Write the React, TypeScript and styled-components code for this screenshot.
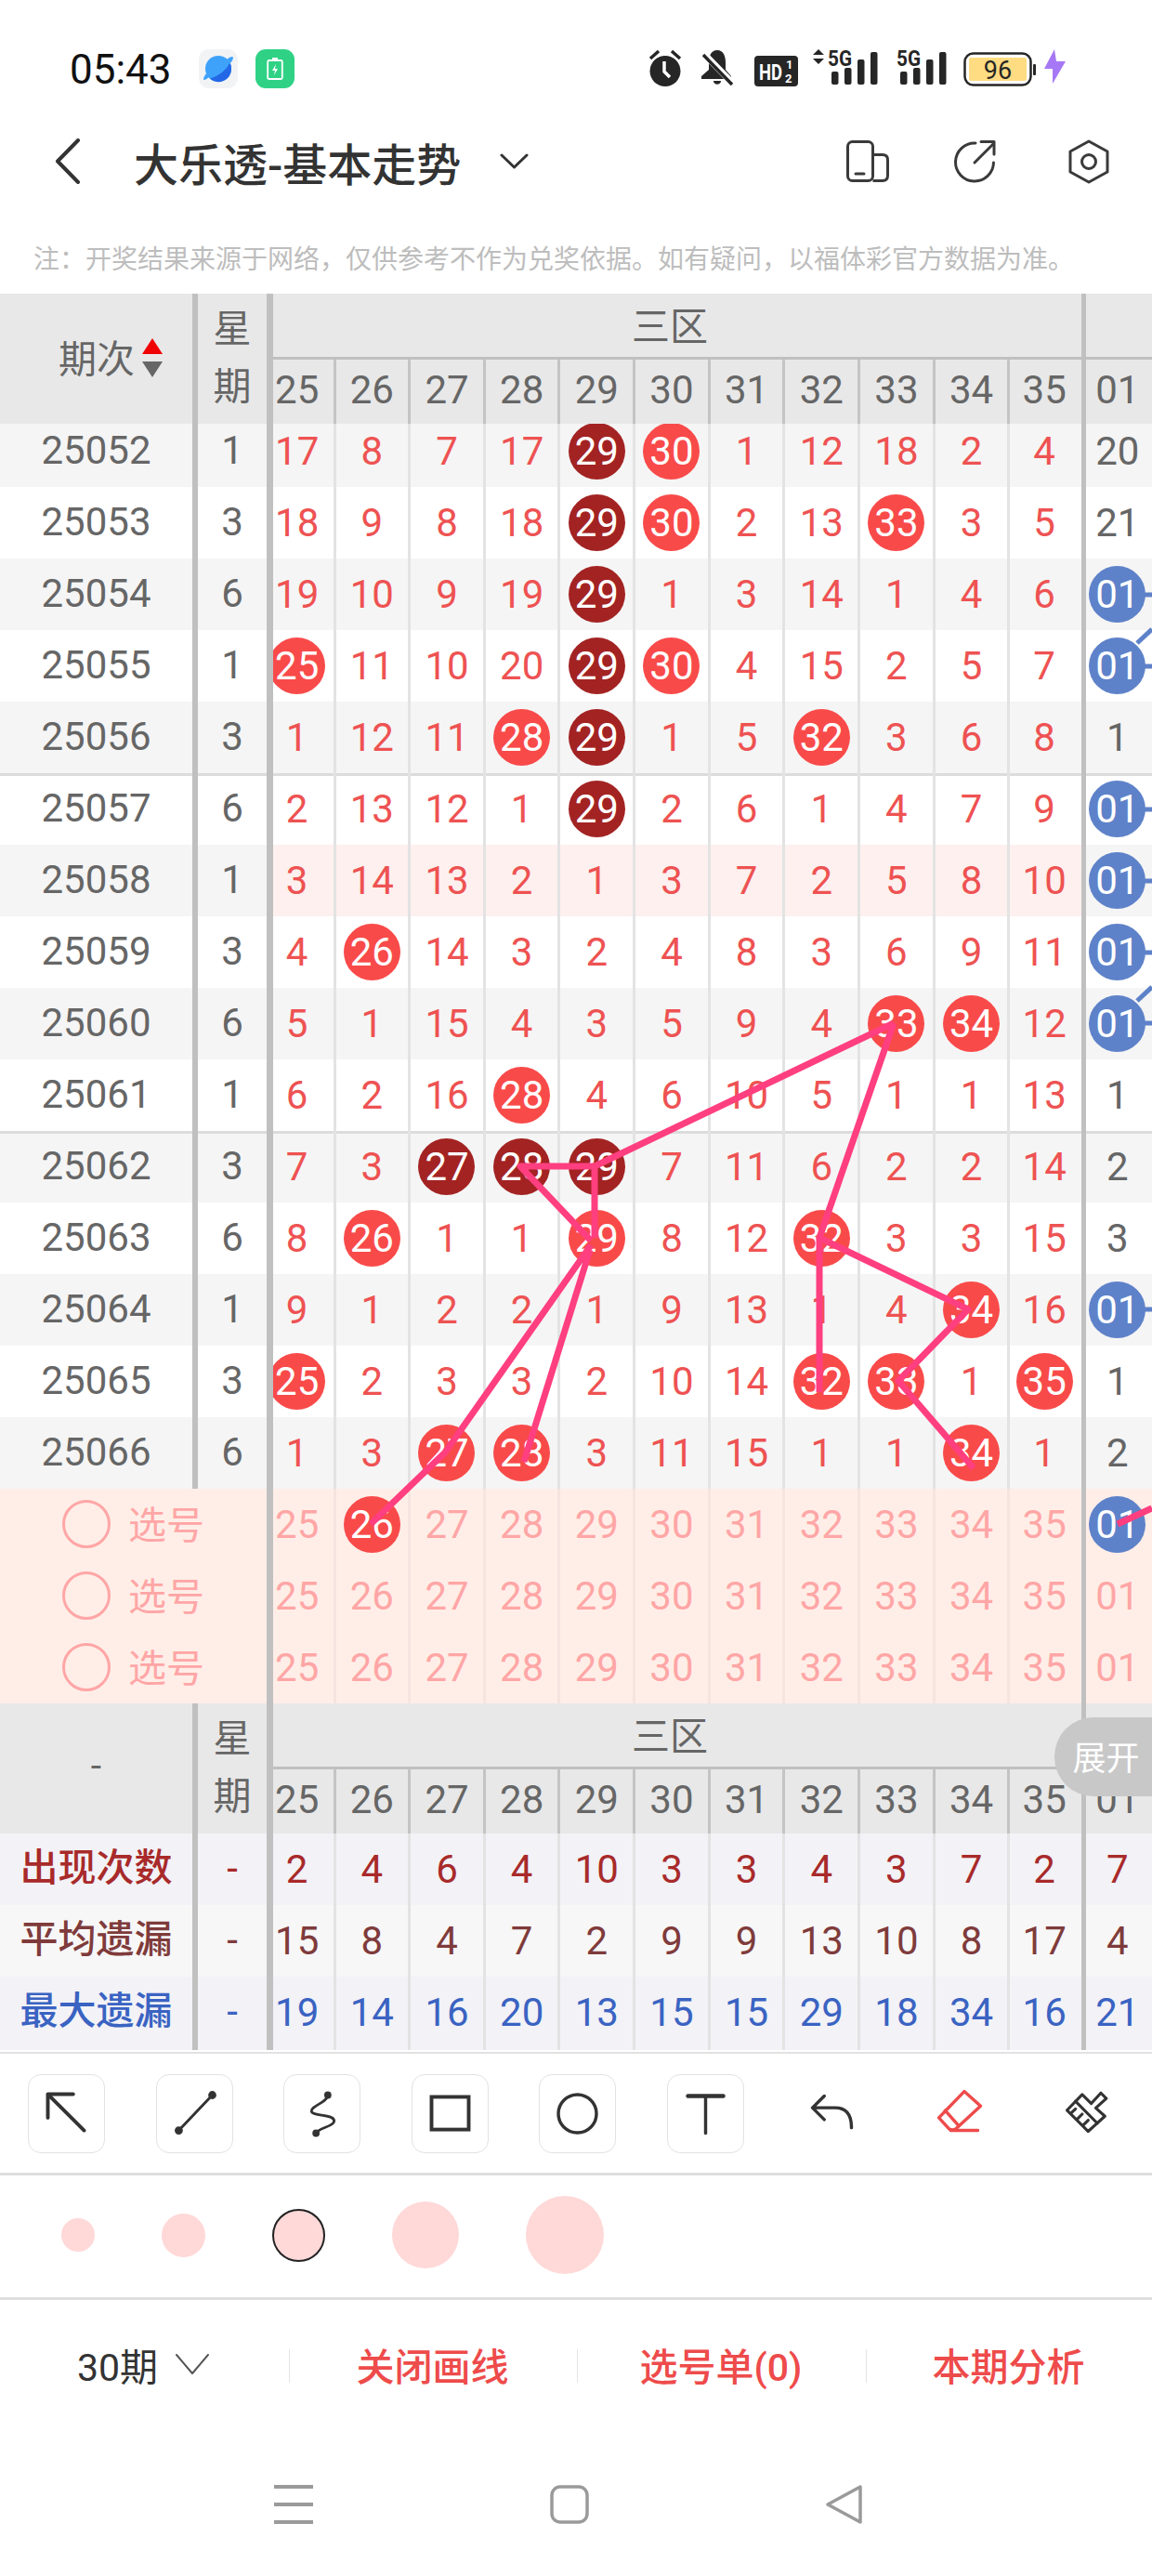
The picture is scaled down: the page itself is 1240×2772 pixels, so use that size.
import React from 'react';
import styled, { createGlobalStyle } from 'styled-components';

const FONT = `Roboto, "Noto Sans CJK SC", "Noto Sans", sans-serif`;
const COLS = '213px 81px 67.5px repeat(9, 80.67px) 76.5px 1fr';
const NUMW = 80.67;

const Global = createGlobalStyle`
  html, body { margin: 0; padding: 0; background: #fff; }
  body { font-family: ${FONT}; }
  * { box-sizing: border-box; }
`;

const Page = styled.div`
  width: 1240px;
  height: 2772px;
  overflow: hidden;
  background: #fff;
  color: #333;
  font-family: ${FONT};
`;

/* ---------- status bar ---------- */
const StatusBar = styled.div`
  height: 125px;
  display: flex;
  align-items: flex-start;
  padding: 53px 93px 0 75px;
`;
const Time = styled.div`
  font-size: 44px;
  line-height: 44px;
  font-weight: 400;
  color: #111;
  margin-right: 29px;
`;
const AppIcon = styled.div<{ $bg: string }>`
  width: 42px;
  height: 42px;
  border-radius: 11px;
  background: ${(p) => p.$bg};
  display: flex;
  align-items: center;
  justify-content: center;
  margin-right: 19px;
`;
const StatusIcons = styled.div`
  margin-left: auto;
  display: flex;
  align-items: flex-start;
`;
const Glyph = styled.span<{ $ml: number; $mt?: number }>`
  display: flex;
  margin-left: ${(p) => p.$ml}px;
  margin-top: ${(p) => p.$mt ?? 0}px;
`;

/* ---------- nav bar ---------- */
const NavBar = styled.div`
  height: 97px;
  display: flex;
  align-items: center;
  padding: 0 46px 0 59px;
`;
const Title = styled.div`
  font-size: 48px;
  font-weight: 500;
  color: #333;
  margin-left: 58px;
  margin-right: 42px;
  white-space: nowrap;
`;
const NavActions = styled.div`
  margin-left: auto;
  display: flex;
  align-items: center;
  gap: 69px;
`;
const Note = styled.div`
  height: 94px;
  padding: 38px 0 0 36px;
  font-size: 28px;
  line-height: 40px;
  color: #bdbdbd;
  white-space: nowrap;
`;

/* ---------- table ---------- */
const Table = styled.div`
  position: relative;
  width: 1240px;
  height: 1890px;
  overflow: hidden;
  font-size: 42px;
`;
const Overlay = styled.svg`
  position: absolute;
  left: 0;
  top: 0;
  pointer-events: none;
`;
const Head = styled.div`
  position: relative;
  display: grid;
  grid-template-columns: ${COLS};
  grid-template-rows: 71px 69px;
  height: 140px;
  background: #e8e8e8;
  color: #666;
`;
const HeadCorner = styled.div<{ $center?: boolean }>`
  grid-row: 1 / 3;
  grid-column: 1;
  display: flex;
  align-items: center;
  justify-content: ${(p) => (p.$center ? 'center' : 'flex-start')};
  padding: ${(p) => (p.$center ? '0 6px 6px 0' : '0 0 6px 63px')};
  gap: 8px;
  font-size: 41px;
  box-shadow: inset -6px 0 #c0c0c0;
`;
const Sort = styled.div`
  display: flex;
  flex-direction: column;
  gap: 8px;
  margin-top: 4px;
`;
const Tri = styled.div<{ $up?: boolean }>`
  width: 0;
  height: 0;
  border-left: 11px solid transparent;
  border-right: 11px solid transparent;
  ${(p) => (p.$up ? 'border-bottom: 17px solid #f00000;' : 'border-top: 17px solid #666;')}
`;
const HeadWeek = styled.div`
  grid-row: 1 / 3;
  grid-column: 2;
  display: flex;
  flex-direction: column;
  align-items: center;
  justify-content: center;
  gap: 14px;
  padding: 0 7px 2px 0;
  font-size: 41px;
  line-height: 48px;
  box-shadow: inset -7px 0 #c0c0c0;
`;
const HeadZone = styled.div`
  grid-row: 1;
  grid-column: 3 / 14;
  display: flex;
  align-items: center;
  justify-content: center;
  font-size: 41px;
  padding: 0 16px 8px 0;
  box-shadow: inset 0 -3px #c0c0c0;
`;
const HeadZoneTail = styled.div`
  grid-row: 1;
  grid-column: 14;
  box-shadow: inset 5px 0 #c0c0c0, inset 0 -3px #c0c0c0;
`;
const Expand = styled.div`
  position: absolute;
  right: 0;
  top: 15px;
  width: 105px;
  height: 85px;
  border-radius: 42px 0 0 42px;
  background: #c8c8c8;
  color: #fff;
  font-size: 36px;
  display: flex;
  align-items: center;
  justify-content: center;
  padding: 0 0 4px 6px;
`;
const Row = styled.div<{ $bg: string; $h?: number; $rule?: boolean; $clip?: boolean }>`
  display: grid;
  grid-template-columns: ${COLS};
  height: ${(p) => p.$h ?? 77}px;
  background: ${(p) => p.$bg};
  overflow: hidden;
  ${(p) => (p.$rule ? 'box-shadow: inset 0 3px #dcdcdc;' : '')}
  ${(p) => (p.$clip ? '&& > * { margin-top: -9px; height: 77px; }' : '')}
`;
const Label = styled.div<{ $color?: string; $medium?: boolean }>`
  height: 100%;
  min-height: 77px;
  display: flex;
  align-items: flex-start;
  justify-content: center;
  line-height: 75px;
  padding-right: 6px;
  color: ${(p) => p.$color ?? '#666'};
  font-size: ${(p) => (p.$medium ? '41px' : '42px')};
  font-weight: ${(p) => (p.$medium ? 500 : 400)};
  box-shadow: inset -6px 0 #c0c0c0;
`;
const Week = styled(Label)`
  padding-right: 7px;
  box-shadow: inset -7px 0 #c0c0c0;
`;
const PickLabel = styled.div`
  grid-column: 1 / 3;
  display: flex;
  align-items: center;
  gap: 19px;
  padding-left: 67px;
  color: #ffa6a6;
  font-size: 41px;
  box-shadow: inset -7px 0 #c0c0c0;
`;
const PickRing = styled.div`
  width: 52px;
  height: 52px;
  border-radius: 50%;
  border: 3px solid #ffa6a6;
  margin-top: -2px;
`;
const PickText = styled.span`
  margin-top: -6px;
`;
type Pos = 'first' | 'mid' | 'end' | 'tail';
const Cell = styled.div<{ $pos: Pos; $line: string; $pink?: boolean }>`
  height: 100%;
  min-height: 69px;
  overflow: hidden;
  display: flex;
  align-items: flex-start;
  justify-content: ${(p) => (p.$pos === 'first' ? 'flex-end' : p.$pos === 'tail' ? 'flex-start' : 'center')};
  background: ${(p) => (p.$pink ? '#fdf0ee' : 'transparent')};
  box-shadow: ${(p) =>
    p.$pos === 'tail'
      ? 'inset 5px 0 #c0c0c0'
      : p.$pos === 'end'
        ? 'none'
        : `inset -3px 0 ${p.$line}`};
`;
const Num = styled.div<{ $color: string; $tall?: boolean }>`
  flex: none;
  width: ${NUMW}px;
  height: ${(p) => (p.$tall ? 77 : 69)}px;
  display: flex;
  align-items: center;
  justify-content: center;
  padding: 0 3px ${(p) => (p.$tall ? 0 : 4)}px 0;
  color: ${(p) => p.$color};
  font-size: 42px;
`;
const Ball = styled.div<{ $bg: string }>`
  width: 61px;
  height: 61px;
  border-radius: 50%;
  background: ${(p) => p.$bg};
  color: #fff;
  display: flex;
  align-items: center;
  justify-content: center;
  flex: none;
`;

/* ---------- drawing tools ---------- */
const Tools = styled.div`
  margin-top: 2px;
  border-top: 2px solid #e2e2e2;
  border-bottom: 3px solid #dedede;
  height: 133px;
  padding: 22px 0 0 30px;
  display: flex;
  gap: 54.5px;
`;
const Tool = styled.div<{ $boxed?: boolean }>`
  width: 83px;
  height: 85px;
  border-radius: 14px;
  border: 1.5px solid ${(p) => (p.$boxed ? '#e2e2e2' : 'transparent')};
  flex: none;
  display: flex;
  align-items: center;
  justify-content: center;
`;
const Sizes = styled.div`
  height: 134px;
  border-bottom: 3px solid #dedede;
  display: flex;
  align-items: center;
  gap: 72px;
  padding: 0 0 3px 66px;
`;
const Dot = styled.div<{ $d: number; $on?: boolean }>`
  width: ${(p) => p.$d}px;
  height: ${(p) => p.$d}px;
  border-radius: 50%;
  background: #ffd8d8;
  border: ${(p) => (p.$on ? '2px solid #222' : 'none')};
`;
const Bottom = styled.div`
  height: 142px;
  display: grid;
  grid-template-columns: 311px 310px 311px 308px;
  align-items: center;
  font-size: 41px;
`;
const BottomItem = styled.div<{ $first?: boolean }>`
  height: 36px;
  display: flex;
  align-items: center;
  justify-content: center;
  gap: 18px;
  padding: 0 2px 5px 0;
  white-space: nowrap;
  color: ${(p) => (p.$first ? '#333' : '#ee4b4b')};
  font-weight: ${(p) => (p.$first ? 400 : 500)};
  ${(p) => (p.$first ? '' : 'border-left: 1.5px solid #e4e4e4;')}
`;
const SysNav = styled.div`
  display: flex;
  gap: 255px;
  padding: 57px 0 0 295px;
`;

/* ---------- icons ---------- */
const D = '#262626';
const Alarm = () => (
  <svg width="36" height="40" viewBox="0 0 36 40">
    <circle cx="18" cy="23.5" r="16.5" fill={D} />
    <path d="M2 10 L11 2 M34 10 L25 2" stroke={D} strokeWidth="3.5" />
    <path d="M17 13 V24 L23 30" stroke="#fff" strokeWidth="3.5" fill="none" />
  </svg>
);
const BellOff = () => (
  <svg width="36" height="40" viewBox="0 0 36 40">
    <path d="M18 1 C11 1 9 8 9 14 V22 L1 29 V32 H33 V29 L27 22 V14 C27 8 25 1 18 1 Z" fill={D} />
    <path d="M14 34 H22 C22 39 14 39 14 34 Z" fill={D} />
    <path d="M3 4 L34 36" stroke="#fff" strokeWidth="7" />
    <path d="M3 6 L34 38" stroke={D} strokeWidth="3.5" />
  </svg>
);
const TextS = styled.text`
  font-family: Roboto, sans-serif;
`;
const HD = () => (
  <svg width="47" height="33" viewBox="0 0 47 33">
    <rect width="47" height="33" rx="4" fill={D} />
    <TextS x="5" y="26" fontSize="24" fontWeight="700" fill="#fff" textLength="25" lengthAdjust="spacingAndGlyphs">HD</TextS>
    <TextS x="34" y="14" fontSize="13" fontWeight="700" fill="#fff">1</TextS>
    <TextS x="33" y="29" fontSize="13" fontWeight="700" fill="#fff">2</TextS>
  </svg>
);
const Signal = ({ arrows }: { arrows?: boolean }) => {
  const o = arrows ? 16 : 0;
  return (
    <svg width={54 + o} height="46" viewBox={`0 -8 ${54 + o} 46`}>
      {arrows && <path d="M0 6 L6 0 L12 6 Z M0 10 L12 10 L6 16 Z" fill={D} />}
      <TextS x={o} y="18" fontSize="23" fontWeight="700" fill={D} textLength="26" lengthAdjust="spacingAndGlyphs">5G</TextS>
      {[[4, 24, 14], [18, 20, 18], [32, 11, 27], [46, 3, 35]].map(([x, y, h]) => (
        <rect key={x} x={x + o} y={y} width="7.5" height={h} rx="2" fill={D} />
      ))}
    </svg>
  );
};
const Battery = () => (
  <svg width="78" height="37" viewBox="0 0 78 37">
    <rect x="1.5" y="1.5" width="71" height="34" rx="9" fill="#fff" stroke={D} strokeWidth="2.5" />
    <rect x="6" y="6" width="62" height="25" rx="2" fill="#ffdc82" />
    <rect x="75" y="13" width="3" height="12" rx="1" fill={D} />
    <TextS x="37" y="28.5" textAnchor="middle" fontSize="27" fill={D}>96</TextS>
  </svg>
);
const Bolt = () => (
  <svg width="23" height="37" viewBox="0 0 23 37">
    <path d="M11 0 L0 21 H9 L9 37 L23 13 H13 Z" fill="#a678f5" />
  </svg>
);
const Back = () => (
  <svg width="27" height="49" viewBox="0 0 27 49">
    <path d="M25 2 L3 24.5 L25 47" fill="none" stroke="#333" strokeWidth="4" strokeLinecap="round" strokeLinejoin="round" />
  </svg>
);
const ChevronDown = ({ w, h, c = '#333', s = 3 }: { w: number; h: number; c?: string; s?: number }) => (
  <svg width={w} height={h} viewBox={`0 0 ${w} ${h}`}>
    <path d={`M2 2 L${w / 2} ${h - 2} L${w - 2} 2`} fill="none" stroke={c} strokeWidth={s} strokeLinecap="round" strokeLinejoin="round" />
  </svg>
);
const PhoneIcon = () => (
  <svg width="46" height="45" viewBox="0 0 46 45" fill="none" stroke="#3a3a3a" strokeWidth="3">
    <rect x="1.5" y="1.5" width="27" height="42" rx="5" />
    <path d="M28.5 15.5 H39 Q44.5 15.5 44.5 21 V38 Q44.5 43.5 39 43.5 H28.5" />
    <path d="M10 36 H19" strokeLinecap="round" />
  </svg>
);
const ShareIcon = () => (
  <svg width="46" height="48" viewBox="0 0 46 48" fill="none" stroke="#3a3a3a" strokeWidth="3" strokeLinecap="round" strokeLinejoin="round">
    <path d="M24 4 A20.5 20.5 0 1 0 43.5 25" />
    <path d="M23 25 L43 5" />
    <path d="M30 2.5 H44 V16" />
  </svg>
);
const HexIcon = () => (
  <svg width="44" height="48" viewBox="0 0 44 48" fill="none" stroke="#3a3a3a" strokeWidth="3" strokeLinejoin="round">
    <path d="M22 2 L42 13 V35 L22 46 L2 35 V13 Z" />
    <circle cx="22" cy="24" r="7.5" />
  </svg>
);
const ToolArrow = () => (
  <svg width="83" height="85" viewBox="0 0 83 85" fill="none" stroke="#333" strokeWidth="4" strokeLinecap="round">
    <path d="M21 21 L61 61 M21 21 H49 M21 21 V47" />
  </svg>
);
const ToolLine = () => (
  <svg width="83" height="85" viewBox="0 0 83 85" fill="none" stroke="#333" strokeWidth="3" strokeLinecap="round">
    <path d="M61 22 L24 61" />
    <circle cx="61" cy="22" r="3" fill="#333" />
    <circle cx="24" cy="61" r="3" fill="#333" />
  </svg>
);
const ToolCurve = () => (
  <svg width="83" height="85" viewBox="0 0 83 85" fill="none" stroke="#333" strokeWidth="2.8" strokeLinecap="round">
    <path d="M48 22 C48 30 29 34 30 40 C31 46 56 42 55 51 C54 57 38 58 35 64" />
    <circle cx="48" cy="22" r="2.6" fill="#333" />
    <circle cx="35" cy="64" r="2.6" fill="#333" />
  </svg>
);
const ToolRect = () => (
  <svg width="83" height="85" viewBox="0 0 83 85" fill="none" stroke="#333" strokeWidth="4">
    <rect x="21" y="24" width="41" height="36" />
  </svg>
);
const ToolCircle = () => (
  <svg width="83" height="85" viewBox="0 0 83 85" fill="none" stroke="#333" strokeWidth="3.5">
    <circle cx="41.5" cy="42.5" r="21" />
  </svg>
);
const ToolText = () => (
  <svg width="83" height="85" viewBox="0 0 83 85" fill="none" stroke="#333" strokeLinecap="round">
    <path d="M22 23 H61" strokeWidth="4.5" />
    <path d="M41.5 23 V64" strokeWidth="3.5" />
  </svg>
);
const ToolUndo = () => (
  <svg width="83" height="85" viewBox="0 0 83 85" fill="none" stroke="#333" strokeWidth="3.5" strokeLinecap="round" strokeLinejoin="round">
    <path d="M32 23 L19 36 L32 49 M19 36 H44 Q62 36 62 58" />
  </svg>
);
const ToolEraser = () => (
  <svg width="83" height="85" viewBox="0 0 83 85" fill="none" stroke="#ee4b4b" strokeWidth="3.5" strokeLinecap="round" strokeLinejoin="round">
    <path d="M45 18 L63 34 L36 59 Q32 62 28 59 L17 47 L45 18 Z" />
    <path d="M24 39 L39 56 M30 61 H60" />
  </svg>
);
const ToolBrush = () => (
  <svg width="83" height="85" viewBox="0 0 83 85" fill="none" stroke="#333" strokeWidth="3.2" strokeLinecap="round" strokeLinejoin="round">
    <path d="M34.7 21.3 L44.7 31.3 L55.3 19.7 L61.3 25.7 L49.7 36.3 L59.7 45.3 L41.3 62 L18 38.7 Z" />
    <path d="M27.3 28.7 L51.3 53 M23 41.3 L27.3 37.3 M29.7 48 L34.7 43 M36.3 54.7 L41.3 49.7" />
  </svg>
);
const BlueApp = () => (
  <svg width="34" height="34" viewBox="0 0 34 34">
    <circle cx="17" cy="17" r="14" fill="#3ea2fb" />
    <path d="M31 17 A14 14 0 0 1 8 27.8 Q24 22 29.5 10.5 Q31 13.5 31 17 Z" fill="#2467e6" />
    <path d="M26 7 Q31 3 33 4.5 Q33 8 29 12 Z M7 26 Q2 30 1 28.5 Q1 26 4 22 Z" fill="#3ea2fb" />
  </svg>
);
const GreenApp = () => (
  <svg width="18" height="24" viewBox="0 0 18 24" fill="none">
    <rect x="1.2" y="3" width="15.6" height="20" rx="1.5" stroke="#fff" strokeWidth="1.8" />
    <rect x="6" y="0" width="6" height="3" fill="#fff" />
    <path d="M10 7 L6 14 H9 L8 19 L12 12 H9 Z" fill="#fff" />
  </svg>
);
const SysMenu = () => (
  <svg width="42" height="42" viewBox="0 0 42 42" fill="#9a9a9a">
    <rect y="0" width="42" height="4" />
    <rect y="19" width="42" height="4" />
    <rect y="38" width="42" height="4" />
  </svg>
);
const SysHome = () => (
  <svg width="42" height="42" viewBox="0 0 42 42" fill="none" stroke="#9a9a9a" strokeWidth="3.5">
    <rect x="2" y="2" width="38" height="38" rx="9" />
  </svg>
);
const SysBack = () => (
  <svg width="40" height="42" viewBox="0 0 40 42" fill="none" stroke="#9a9a9a" strokeWidth="3.5" strokeLinejoin="round">
    <path d="M37 2 V40 L2 21 Z" />
  </svg>
);

/* ---------- data ---------- */
type V = number | string;
const zone = ['25', '26', '27', '28', '29', '30', '31', '32', '33', '34', '35', '01'];
// r = red ball, d = dark ball, b = blue ball
const rows: { id: number; w: number; c: V[] }[] = [
  { id: 25052, w: 1, c: [17, 8, 7, 17, 'd', 'r', 1, 12, 18, 2, 4, 20] },
  { id: 25053, w: 3, c: [18, 9, 8, 18, 'd', 'r', 2, 13, 'r', 3, 5, 21] },
  { id: 25054, w: 6, c: [19, 10, 9, 19, 'd', 1, 3, 14, 1, 4, 6, 'b'] },
  { id: 25055, w: 1, c: ['r', 11, 10, 20, 'd', 'r', 4, 15, 2, 5, 7, 'b'] },
  { id: 25056, w: 3, c: [1, 12, 11, 'r', 'd', 1, 5, 'r', 3, 6, 8, 1] },
  { id: 25057, w: 6, c: [2, 13, 12, 1, 'd', 2, 6, 1, 4, 7, 9, 'b'] },
  { id: 25058, w: 1, c: [3, 14, 13, 2, 1, 3, 7, 2, 5, 8, 10, 'b'] },
  { id: 25059, w: 3, c: [4, 'r', 14, 3, 2, 4, 8, 3, 6, 9, 11, 'b'] },
  { id: 25060, w: 6, c: [5, 1, 15, 4, 3, 5, 9, 4, 'r', 'r', 12, 'b'] },
  { id: 25061, w: 1, c: [6, 2, 16, 'r', 4, 6, 10, 5, 1, 1, 13, 1] },
  { id: 25062, w: 3, c: [7, 3, 'd', 'd', 'd', 7, 11, 6, 2, 2, 14, 2] },
  { id: 25063, w: 6, c: [8, 'r', 1, 1, 'r', 8, 12, 'r', 3, 3, 15, 3] },
  { id: 25064, w: 1, c: [9, 1, 2, 2, 1, 9, 13, 1, 4, 'r', 16, 'b'] },
  { id: 25065, w: 3, c: ['r', 2, 3, 3, 2, 10, 14, 'r', 'r', 1, 'r', 1] },
  { id: 25066, w: 6, c: [1, 3, 'r', 'r', 3, 11, 15, 1, 1, 'r', 1, 2] },
];
const stats = [
  { label: '出现次数', color: '#a82a2a', bg: '#f2f2f7', v: [2, 4, 6, 4, 10, 3, 3, 4, 3, 7, 2, 7] },
  { label: '平均遗漏', color: '#7f3b3b', bg: '#f7f7f7', v: [15, 8, 4, 7, 2, 9, 9, 13, 10, 8, 17, 4] },
  { label: '最大遗漏', color: '#3a63c2', bg: '#f2f2f7', v: [19, 14, 16, 20, 13, 15, 15, 29, 18, 34, 16, 21] },
];
const ballColor: Record<string, string> = { r: '#f94a4a', d: '#a32323', b: '#5e82c9' };
const posOf = (i: number): Pos => (i === 0 ? 'first' : i === 10 ? 'end' : i === 11 ? 'tail' : 'mid');

const pinkLines = [
  '962,1101 640,1255 560,1255 636,1335',
  '640,1255 640,1332',
  '962,1101 882,1332 1042,1409 967,1486 1048,1580',
  '882,1332 882,1498',
  '635,1345 564,1573',
  '636,1340 479,1563 399,1640',
  '1203,1640 1240,1623',
];
const blueStubs = [640, 717, 871, 948, 1025, 1101, 1409];
const blueDiag = ['M1224 692 L1240 677', 'M1224 1077 L1240 1062'];

const Header: React.FC<{ corner: React.ReactNode; center?: boolean; expand?: boolean }> = ({ corner, center, expand }) => (
  <Head>
    <HeadCorner $center={center}>{corner}</HeadCorner>
    <HeadWeek>
      <span>星</span>
      <span>期</span>
    </HeadWeek>
    <HeadZone>三区</HeadZone>
    <HeadZoneTail />
    {zone.map((z, i) => (
      <Cell key={z} $pos={posOf(i)} $line="#c4c4c4">
        <Num $color="#666">{z}</Num>
      </Cell>
    ))}
    {expand && <Expand>展开</Expand>}
  </Head>
);

export default function App() {
  return (
    <Page>
      <Global />
      <StatusBar>
        <Time>05:43</Time>
        <AppIcon $bg="#f2f3f5">
          <BlueApp />
        </AppIcon>
        <AppIcon $bg="#2fd285">
          <GreenApp />
        </AppIcon>
        <StatusIcons>
          <Glyph $ml={0}><Alarm /></Glyph>
          <Glyph $ml={20}><BellOff /></Glyph>
          <Glyph $ml={22} $mt={7}><HD /></Glyph>
          <Glyph $ml={16} $mt={-8}><Signal arrows /></Glyph>
          <Glyph $ml={20} $mt={-8}><Signal /></Glyph>
          <Glyph $ml={18} $mt={3}><Battery /></Glyph>
          <Glyph $ml={9}><Bolt /></Glyph>
        </StatusIcons>
      </StatusBar>

      <NavBar>
        <Back />
        <Title>大乐透-基本走势</Title>
        <ChevronDown w={31} h={17} />
        <NavActions>
          <PhoneIcon />
          <ShareIcon />
          <Glyph $ml={9}><HexIcon /></Glyph>
        </NavActions>
      </NavBar>
      <Note>注：开奖结果来源于网络，仅供参考不作为兑奖依据。如有疑问，以福体彩官方数据为准。</Note>

      <Table>
        <Header
          corner={
            <>
              <span>期次</span>
              <Sort>
                <Tri $up />
                <Tri />
              </Sort>
            </>
          }
        />
        {rows.map((r, ri) => (
          <Row
            key={r.id}
            $bg={ri % 2 === 0 ? '#f5f5f5' : '#fff'}
            $h={ri === 0 ? 68 : 77}
            $clip={ri === 0}
            $rule={ri === 5 || ri === 10}
          >
            <Label>{r.id}</Label>
            <Week>{r.w}</Week>
            {r.c.map((v, i) => {
              const isBall = typeof v === 'string';
              return (
                <Cell key={i} $pos={posOf(i)} $line="#e3e3e3" $pink={r.id === 25058 && i < 11}>
                  <Num $tall $color={i === 11 ? '#666' : '#ee5252'}>
                    {isBall ? <Ball $bg={ballColor[v as string]}>{zone[i]}</Ball> : v}
                  </Num>
                </Cell>
              );
            })}
          </Row>
        ))}
        {[0, 1, 2].map((k) => (
          <Row key={k} $bg="#ffeee8">
            <PickLabel>
              <PickRing />
              <PickText>选号</PickText>
            </PickLabel>
            {zone.map((z, i) => (
              <Cell key={z} $pos={posOf(i)} $line="#f5e4df">
                <Num $tall $color="#ffa6a6">
                  {k === 0 && i === 1 ? (
                    <Ball $bg={ballColor.r}>{z}</Ball>
                  ) : k === 0 && i === 11 ? (
                    <Ball $bg={ballColor.b}>{z}</Ball>
                  ) : (
                    z
                  )}
                </Num>
              </Cell>
            ))}
          </Row>
        ))}
        <Header corner="-" center expand />
        {stats.map((s, si) => (
          <Row key={s.label} $bg={s.bg} $h={si === 2 ? 79 : 77}>
            <Label $color={s.color} $medium>{s.label}</Label>
            <Week $color={s.color}>-</Week>
            {s.v.map((v, i) => (
              <Cell key={i} $pos={posOf(i)} $line="#e3e3e3">
                <Num $tall $color={s.color}>{v}</Num>
              </Cell>
            ))}
          </Row>
        ))}
        <Overlay width="1240" height="1890" viewBox="0 316 1240 1890">
          <g fill="none" stroke="#ff3f7f" strokeWidth="7" strokeLinejoin="round">
            {pinkLines.map((p) => (
              <polyline key={p} points={p} />
            ))}
          </g>
          <g fill="none" stroke="#5e82c9" strokeWidth="5">
            {blueStubs.map((y) => (
              <path key={y} d={`M1232 ${y} H1240`} />
            ))}
            {blueDiag.map((d) => (
              <path key={d} d={d} />
            ))}
          </g>
        </Overlay>
      </Table>

      <Tools>
        <Tool $boxed><ToolArrow /></Tool>
        <Tool $boxed><ToolLine /></Tool>
        <Tool $boxed><ToolCurve /></Tool>
        <Tool $boxed><ToolRect /></Tool>
        <Tool $boxed><ToolCircle /></Tool>
        <Tool $boxed><ToolText /></Tool>
        <Tool><ToolUndo /></Tool>
        <Tool><ToolEraser /></Tool>
        <Tool><ToolBrush /></Tool>
      </Tools>
      <Sizes>
        <Dot $d={36} />
        <Dot $d={47} />
        <Dot $d={57} $on />
        <Dot $d={72} />
        <Dot $d={84} />
      </Sizes>
      <Bottom>
        <BottomItem $first>
          <span>30期</span>
          <ChevronDown w={38} h={24} c="#555" s={2} />
        </BottomItem>
        <BottomItem>关闭画线</BottomItem>
        <BottomItem>选号单(0)</BottomItem>
        <BottomItem>本期分析</BottomItem>
      </Bottom>
      <SysNav>
        <SysMenu />
        <SysHome />
        <SysBack />
      </SysNav>
    </Page>
  );
}
